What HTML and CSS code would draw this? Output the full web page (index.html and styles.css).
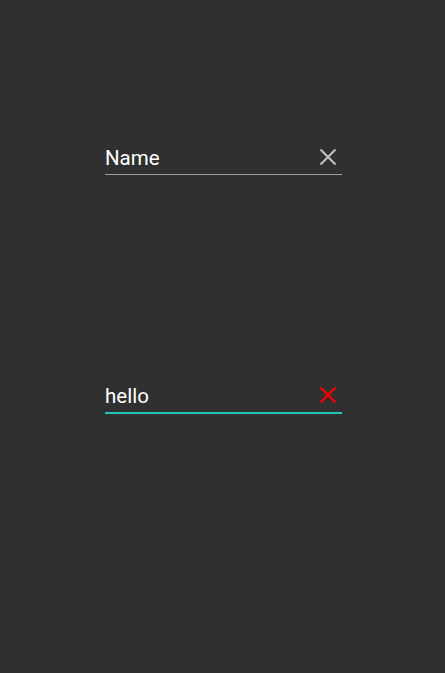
FILE: index.html
```html
<!DOCTYPE html>
<html>
<head>
<meta charset="utf-8">
<link rel="stylesheet" href="styles.css">
</head>
<body>
<div class="page">
  <div class="field">
    <div class="row">
      <span class="label">Name</span>
      <svg class="icon" viewBox="0 0 24 24" width="24" height="24"><path d="M4.5 4.5L19.5 19.5M19.5 4.5L4.5 19.5" stroke="#bdbdbd" stroke-width="2.2" fill="none"/></svg>
    </div>
    <div class="line"></div>
  </div>
  <div class="field active">
    <div class="row">
      <span class="label">hello</span>
      <svg class="icon" viewBox="0 0 24 24" width="24" height="24"><path d="M4.5 4.5L19.5 19.5M19.5 4.5L4.5 19.5" stroke="#ff0000" stroke-width="2.2" fill="none"/></svg>
    </div>
    <div class="line"></div>
  </div>
</div>
</body>
</html>
```
FILE: styles.css
```css
html, body {
  margin: 0;
  padding: 0;
  background: #303030;
  height: 100%;
}
.page {
  display: flex;
  flex-direction: column;
  padding: 145px 0 0 105px;
  gap: 208px;
}
.field {
  width: 237px;
  display: flex;
  flex-direction: column;
}
.row {
  display: flex;
  align-items: center;
  justify-content: space-between;
  height: 24px;
  padding-right: 2px;
}
.label {
  font-family: Roboto, "Noto Sans", sans-serif;
  font-size: 20.5px;
  line-height: 24px;
  padding-top: 2px;
  color: #ffffff;
}
.icon {
  display: block;
}
.line {
  margin-top: 5px;
  height: 1px;
  background: #9e9e9e;
}
.field.active .line {
  height: 2px;
  margin-top: 5px;
  background: #1ec8b6;
}
```
